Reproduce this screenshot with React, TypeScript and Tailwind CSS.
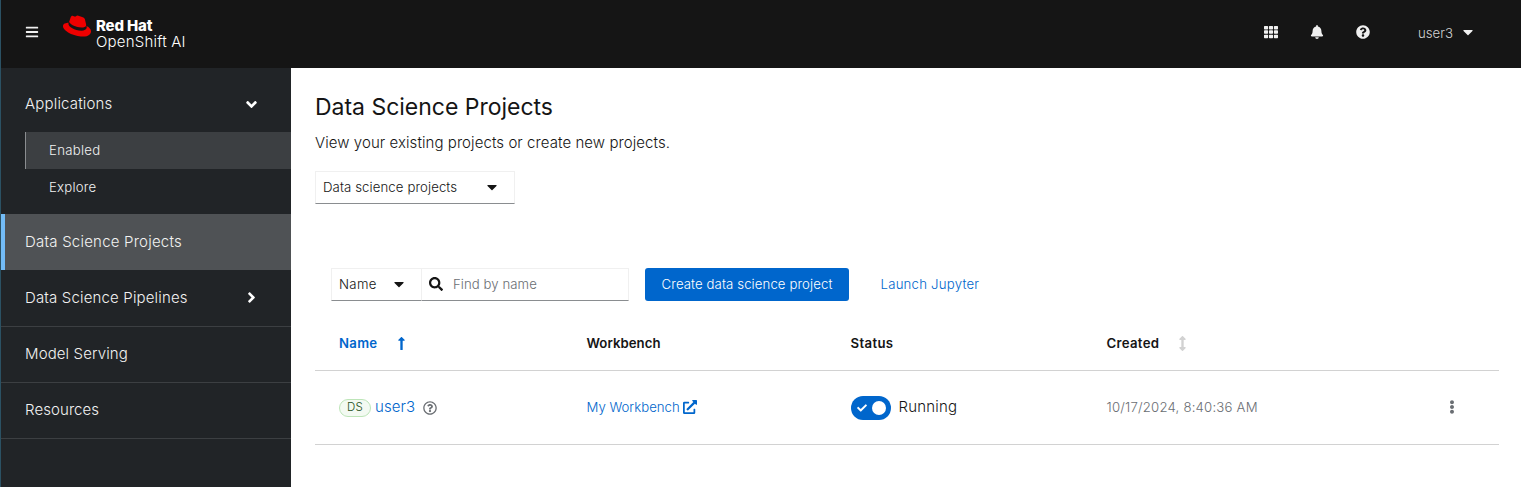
import type { ReactNode } from "react";
import {
  FaAngleDown,
  FaAngleRight,
  FaArrowsAltV,
  FaBars,
  FaBell,
  FaCaretDown,
  FaCheck,
  FaEllipsisV,
  FaExternalLinkAlt,
  FaLongArrowAltUp,
  FaQuestionCircle,
  FaRedhat,
  FaRegQuestionCircle,
  FaSearch,
  FaTh,
} from "react-icons/fa";

function Masthead() {
  return (
    <header className="flex h-[68px] items-center bg-[#151515] pl-6 text-[#f0f0f0]">
      <button className="flex w-4 shrink-0 pb-1" aria-label="Navigation">
        <FaBars size={14} />
      </button>
      <div className="ml-[22px] flex items-start pb-[3px]">
        <FaRedhat size={28} className="-mt-[3px] text-[#ee0000]" />
        <div className="ml-[5px] mt-[3px] text-[15px] leading-4 text-white">
          <div className="font-extrabold tracking-[-0.15px]">Red Hat</div>
          <div className="tracking-[0.2px]">OpenShift AI</div>
        </div>
      </div>
      <div className="ml-auto flex items-center pr-[45px]">
        <div className="flex gap-8 pb-1">
          <FaTh size={14} />
          <FaBell size={14} />
          <FaQuestionCircle size={14} />
        </div>
        <button className="ml-12 flex items-center text-[#d2d2d2]">
          <span className="text-[13.2px]">user3</span>
          <FaCaretDown size={16} className="mb-1 ml-[7px] text-[#f0f0f0]" />
        </button>
      </div>
    </header>
  );
}

function NavRow({ children, className = "" }: { children: ReactNode; className?: string }) {
  return (
    <a className={`flex h-14 items-center justify-between pl-6 pr-[34px] text-[15px] ${className}`}>
      {children}
    </a>
  );
}

function Sidebar() {
  return (
    <nav className="w-[290px] shrink-0 bg-[#212427] pt-2 text-[#f2f2f2]">
      <NavRow>
        <span className="tracking-[0.18px]">Applications</span>
        <FaAngleDown size={17} className="-mr-[3px] text-white" />
      </NavRow>
      <div className="pb-2 pl-6 text-[13.2px]">
        <a className="flex h-[37px] items-center border-l border-[#8a8d90] bg-[#3c3f42] pl-[23px] tracking-[0.28px]">
          Enabled
        </a>
        <a className="flex h-[37px] items-center pl-6 tracking-[0.2px]">Explore</a>
      </div>
      <NavRow className="border-l-4 border-[#73bcf7] bg-[#4f5255] !pl-5 tracking-[0.22px]">
        Data Science Projects
      </NavRow>
      <NavRow>
        <span className="tracking-[0.16px]">Data Science Pipelines</span>
        <FaAngleRight size={17} className="-mr-[3px] mb-[2px] text-white" />
      </NavRow>
      <NavRow className="border-t border-[#3c3f42] tracking-[0.12px]">Model Serving</NavRow>
      <NavRow className="border-t border-[#3c3f42] tracking-[0.08px]">Resources</NavRow>
      <div className="border-t border-[#3c3f42]" />
    </nav>
  );
}

function Toolbar() {
  return (
    <div className="mt-16 flex h-[33px] items-stretch pl-4 text-[13.2px]">
      <button className="flex w-[91px] items-center justify-between border border-[#f0f0f0] border-b-[#8a8d90] pl-[7px] pr-[14px]">
        <span className="tracking-[0.35px]">Name</span>
        <FaCaretDown size={16} className="mb-[2px]" />
      </button>
      <div className="flex w-[207px] items-center border border-l-0 border-[#f0f0f0] border-b-[#8a8d90] pl-[7px]">
        <FaSearch size={14} className="mb-[2px]" />
        <span className="ml-[10px] tracking-[0.06px] text-[#6a6e73]">Find by name</span>
      </div>
      <button className="ml-4 w-[204px] rounded-[3px] bg-[#0066cc] tracking-[0.1px] text-white">
        Create data science project
      </button>
      <button className="ml-[31.5px] tracking-[0.22px] text-[#0066cc]">Launch Jupyter</button>
    </div>
  );
}

const columns = "grid grid-cols-[247.5px_264px_256px_345.5px_1fr] items-center border-b border-[#d2d2d2] pl-6";

function ProjectsTable() {
  return (
    <div className="mt-[15px] w-[1184px]">
      <div className={`${columns} h-[55px] pt-px text-[13.2px] font-semibold`}>
        <div className="flex items-center tracking-[0.3px] text-[#0066cc]">
          Name
          <FaLongArrowAltUp size={15} className="ml-[17px]" />
        </div>
        <div className="tracking-[0.05px]">Workbench</div>
        <div className="tracking-[0.35px]">Status</div>
        <div className="flex items-center tracking-[0.3px]">
          Created
          <FaArrowsAltV size={15} className="ml-[16px] text-[#d2d2d2]" />
        </div>
      </div>
      <div className={`${columns} h-[74px] text-[13.2px]`}>
        <div className="flex items-center">
          <span className="flex h-[18px] w-8 items-center justify-center rounded-full border border-[#bde5b8] bg-[#f3faf2] pt-px text-[11.5px] tracking-[0.2px] text-[#1e4f18]">
            DS
          </span>
          <a className="ml-[4px] text-[15px] tracking-[0.1px] text-[#0066cc]">user3</a>
          <FaRegQuestionCircle size={14} className="ml-2 text-[#6a6e73]" />
        </div>
        <a className="flex items-center text-[#0066cc]">
          My Workbench
          <FaExternalLinkAlt size={14} className="ml-[3px]" />
        </a>
        <div className="flex items-center">
          <span className="flex h-6 w-10 items-center justify-between rounded-full bg-[#0066cc] pl-[6px] pr-[5px] text-white">
            <FaCheck size={10} />
            <span className="size-[14px] rounded-full bg-white" />
          </span>
          <span className="ml-2 text-[15px] tracking-[0.2px]">Running</span>
        </div>
        <div className="tracking-[0.2px] text-[#6a6e73]">10/17/2024, 8:40:36 AM</div>
        <button className="w-0 text-[#6a6e73]" aria-label="Actions">
          <FaEllipsisV size={14} className="-ml-[7px] -mt-[2px]" />
        </button>
      </div>
    </div>
  );
}

export default function App() {
  return (
    <div className="flex h-[487px] w-full flex-col overflow-hidden border-l border-[#2b5163] bg-white font-['Inter',sans-serif] font-[350] text-[#151515]">
      <Masthead />
      <div className="flex min-h-0 flex-1">
        <Sidebar />
        <main className="flex-1 pl-6 pt-6">
          <h1 className="text-[23px] font-[430] leading-[31px] tracking-[-0.02px]">Data Science Projects</h1>
          <p className="mt-2 text-[15px] leading-6 tracking-[0.07px]">
            View your existing projects or create new projects.
          </p>
          <button className="mt-4 flex h-[33px] w-[200px] items-center justify-between border border-[#f0f0f0] border-b-[#8a8d90] pl-[7px] pr-[14px] text-[13.2px] tracking-[0.1px]">
            Data science projects
            <FaCaretDown size={16} className="mb-[2px]" />
          </button>
          <Toolbar />
          <ProjectsTable />
        </main>
      </div>
    </div>
  );
}
